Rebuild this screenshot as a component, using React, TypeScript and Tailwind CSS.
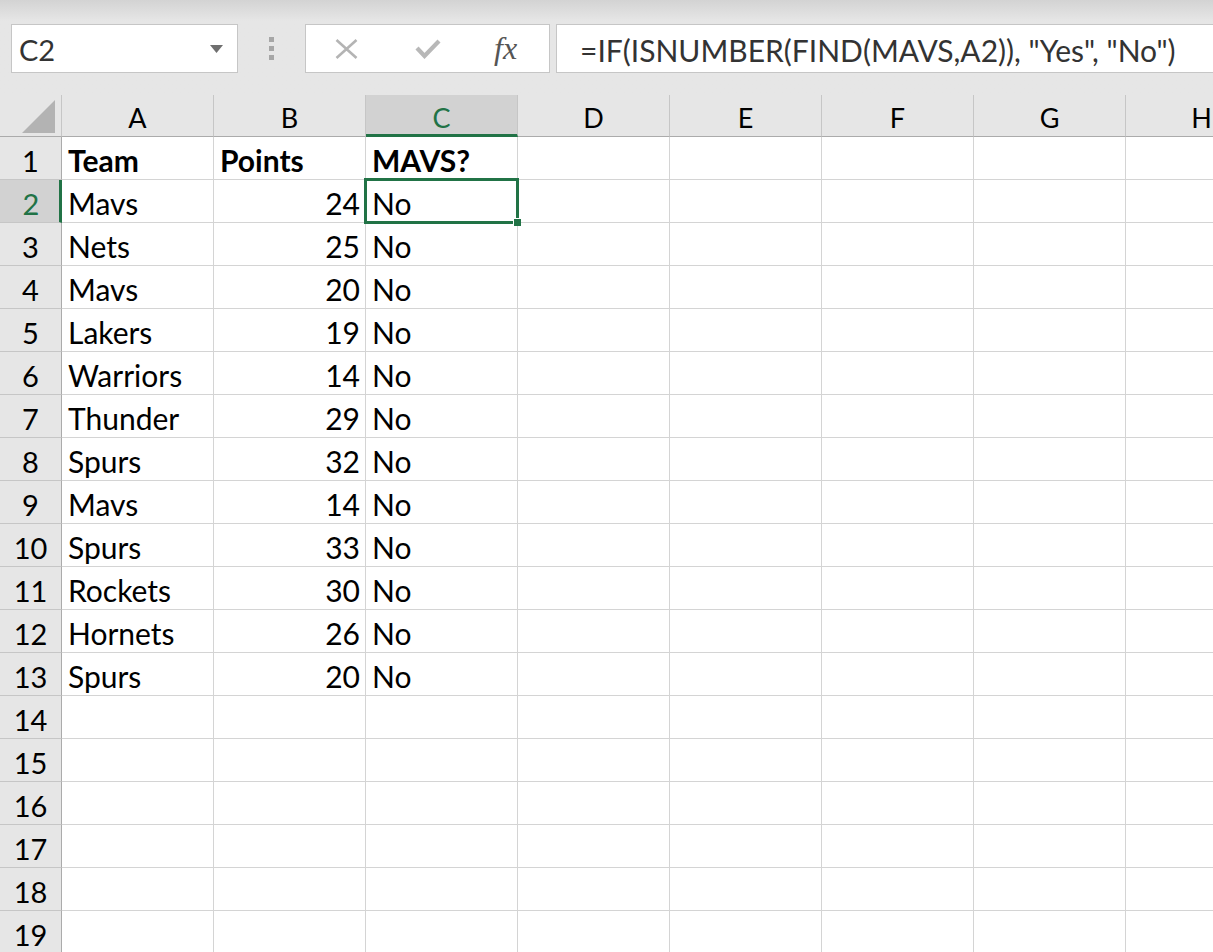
import React from "react";

const rows: [string, string, string][] = [
  ["Mavs", "24", "No"],
  ["Nets", "25", "No"],
  ["Mavs", "20", "No"],
  ["Lakers", "19", "No"],
  ["Warriors", "14", "No"],
  ["Thunder", "29", "No"],
  ["Spurs", "32", "No"],
  ["Mavs", "14", "No"],
  ["Spurs", "33", "No"],
  ["Rockets", "30", "No"],
  ["Hornets", "26", "No"],
  ["Spurs", "20", "No"],
];

const cols = ["A", "B", "C", "D", "E", "F", "G", "H"];

function Toolbar() {
  return (
    <div className="h-[95px] bg-gradient-to-b from-[#d3d3d3] to-[#e6e6e6] to-[22%] pt-[24px]">
      <div className="flex h-[49px] items-stretch">
        {/* name box */}
        <div className="ml-[11px] w-[227px] bg-white border border-[#c6c6c6] flex items-center justify-between pl-[7px] pr-[14px]">
          <span className="text-[29px] text-[#333] pt-[2px]">C2</span>
          <svg width="13" height="8" viewBox="0 0 13 8">
            <path d="M0 0 L13 0 L6.5 8 Z" fill="#6f6f6f" />
          </svg>
        </div>
        {/* grip */}
        <div className="w-[67px] flex flex-col items-center justify-center gap-[4px]">
          <span className="w-[5px] h-[5px] bg-[#a6a6a6]" />
          <span className="w-[5px] h-[5px] bg-[#a6a6a6]" />
          <span className="w-[5px] h-[5px] bg-[#a6a6a6]" />
        </div>
        {/* cancel / enter / fx */}
        <div className="w-[245px] bg-white border border-[#c6c6c6] flex items-center">
          <svg className="ml-[29px]" width="23" height="20" viewBox="0 0 23 20">
            <path d="M1.5 1 L21.5 19 M21.5 1 L1.5 19" stroke="#b4b4b4" strokeWidth="2.6" />
          </svg>
          <svg className="ml-[57px]" width="26" height="21" viewBox="0 0 26 21">
            <path d="M2 10 L9.5 18 L24 3" stroke="#b8b8b8" strokeWidth="4.2" fill="none" />
          </svg>
          <span className="ml-[53px] text-[32px] italic text-[#555] font-['Liberation_Serif',serif] leading-none pb-[2px]">
            fx
          </span>
        </div>
        {/* formula */}
        <div className="ml-[6px] flex-1 bg-white border border-[#c6c6c6] border-r-0 flex items-center pl-[23px]">
          <span className="text-[30px] text-[#333] whitespace-nowrap pt-[2px]">
            =IF(ISNUMBER(FIND(MAVS,A2)), "Yes", "No")
          </span>
        </div>
      </div>
    </div>
  );
}

function HeaderRow() {
  return (
    <div className="flex h-[42px]">
      <div className="w-[62px] shrink-0 border-r border-[#c6c6c6] border-b border-b-[#ababab] relative">
        <svg className="absolute left-[22px] top-[5px]" width="33" height="33" viewBox="0 0 33 33">
          <path d="M33 0 L33 33 L0 33 Z" fill="#b3b3b3" />
        </svg>
      </div>
      {cols.map((c) => (
        <div
          key={c}
          className={
            c === "C"
              ? "w-[152px] shrink-0 flex items-center justify-center bg-[#d2d2d2] border-r border-[#c6c6c6] border-b-[3px] border-b-[#217346] text-[#217346] text-[27px] pt-[5px]"
              : "w-[152px] shrink-0 flex items-center justify-center border-r border-[#c6c6c6] border-b border-b-[#ababab] text-black text-[27px] pt-[3px]"
          }
        >
          {c}
        </div>
      ))}
    </div>
  );
}

function Row({ n, data }: { n: number; data?: [string, string, string] }) {
  const selectedRow = n === 2;
  return (
    <div className="flex h-[43px] bg-white">
      <div
        className={
          selectedRow
            ? "w-[62px] shrink-0 bg-[#d2d2d2] border-r-[3px] border-r-[#217346] border-b border-b-[#c6c6c6] flex items-center justify-center text-[29px] text-[#217346] pl-[3px] pt-[4px]"
            : "w-[62px] shrink-0 bg-[#e6e6e6] border-r border-r-[#ababab] border-b border-b-[#c6c6c6] flex items-center justify-center text-[29px] text-black pt-[4px]"
        }
      >
        {n}
      </div>
      {cols.map((c, i) => {
        let content: React.ReactNode = null;
        let align = "justify-start pl-[6px]";
        let weight = "";
        if (n === 1) {
          content = ["Team", "Points", "MAVS?"][i] ?? null;
          weight = "font-bold";
        } else if (data) {
          if (i === 0) content = data[0];
          if (i === 1) {
            content = data[1];
            align = "justify-end pr-[5px]";
          }
          if (i === 2) content = data[2];
        }
        const selected = selectedRow && c === "C";
        return (
          <div
            key={c}
            className={`w-[152px] shrink-0 border-r border-b border-[#d4d4d4] flex items-center ${align} ${weight} text-[30px] text-black relative pt-[4px]`}
          >
            {content}
            {selected && (
              <>
                <div className="absolute z-10 left-[-2px] top-[-2px] w-[155px] h-[46px] border-[3px] border-[#217346]" />
                <div className="absolute z-20 left-[147px] top-[38px] w-[8px] h-[8px] bg-[#217346] border-l border-t border-white" />
              </>
            )}
          </div>
        );
      })}
    </div>
  );
}

export default function App() {
  return (
    <div className="w-[1213px] h-[952px] overflow-hidden bg-[#e6e6e6] font-['Lato',sans-serif] leading-none">
      <Toolbar />
      <HeaderRow />
      {Array.from({ length: 19 }, (_, k) => k + 1).map((n) => (
        <Row key={n} n={n} data={n >= 2 ? rows[n - 2] : undefined} />
      ))}
    </div>
  );
}
